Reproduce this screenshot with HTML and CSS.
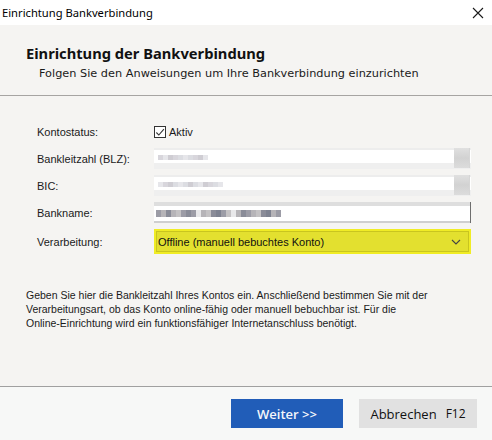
FILE: index.html
```html
<!DOCTYPE html>
<html lang="de">
<head>
<meta charset="utf-8">
<title>Einrichtung Bankverbindung</title>
<link rel="stylesheet" href="styles.css">
</head>
<body>
<div class="window">
  <div class="titlebar">
    <span class="title">Einrichtung Bankverbindung</span>
    <svg class="close" width="12" height="12" viewBox="0 0 12 12"><path d="M1 1 L11 11 M11 1 L1 11" stroke="#1a1a1a" stroke-width="1.1" fill="none"/></svg>
  </div>
  <div class="header">
    <div class="heading">Einrichtung der Bankverbindung</div>
    <div class="subtitle">Folgen Sie den Anweisungen um Ihre Bankverbindung einzurichten</div>
  </div>
  <div class="body">
    <div class="form">
      <div class="label">Kontostatus:</div>
      <div class="check-row">
        <span class="checkbox"><svg width="11" height="11" viewBox="0 0 11 11"><path d="M1.5 5.5 L4.2 8.3 L9.8 1.8" stroke="#333" stroke-width="1.2" fill="none"/></svg></span>
        <span class="check-label">Aktiv</span>
      </div>

      <div class="label">Bankleitzahl (BLZ):</div>
      <div class="field field-blur">
        <div class="blur-line"><i class="p1"></i><i class="p2"></i><i class="p3"></i><i class="p1"></i><i class="p4"></i><i class="p2"></i><i class="p4"></i><i class="p1"></i><i class="p3"></i><i class="p2"></i></div>
        <div class="spin"></div>
      </div>

      <div class="label">BIC:</div>
      <div class="field field-blur">
        <div class="blur-line"><i class="p2"></i><i class="p1"></i><i class="p3"></i><i class="p4"></i><i class="p2"></i><i class="p4"></i><i class="p3"></i><i class="p4"></i><i class="p2"></i><i class="p3"></i><i class="p1"></i><i class="p4"></i><i class="p2"></i></div>
        <div class="spin"></div>
      </div>

      <div class="label">Bankname:</div>
      <div class="field field-name">
        <div class="blur-line dark"><i class="d1"></i><i class="d2"></i><i class="d3"></i><i class="d2"></i><i class="d4"></i><i class="d1"></i><i class="d3"></i><i class="d1"></i><i class="d5"></i><i class="d2"></i><i class="d4"></i><i class="d3"></i><i class="d6"></i><i class="d1"></i><i class="d4"></i><i class="d5"></i><i class="d2"></i><i class="d3"></i><i class="d1"></i><i class="d2"></i><i class="d4"></i><i class="d3"></i><i class="d6"></i><i class="d2"></i><i class="d1"></i></div>
      </div>

      <div class="label">Verarbeitung:</div>
      <div class="select">
        <span class="select-text">Offline (manuell bebuchtes Konto)</span>
        <svg class="chev" width="10" height="6" viewBox="0 0 10 6"><path d="M1 1 L5 5 L9 1" stroke="#444" stroke-width="1.1" fill="none"/></svg>
      </div>
    </div>

    <p class="info">Geben Sie hier die Bankleitzahl Ihres Kontos ein. Anschließend bestimmen Sie mit der<br>Verarbeitungsart, ob das Konto online-fähig oder manuell bebuchbar ist. Für die<br>Online-Einrichtung wird ein funktionsfähiger Internetanschluss benötigt.</p>
  </div>
  <div class="footer">
    <button class="btn btn-primary">Weiter &gt;&gt;</button>
    <button class="btn btn-secondary">Abbrechen<span class="key">F12</span></button>
  </div>
</div>
</body>
</html>
```
FILE: styles.css
```css
* { box-sizing: border-box; }
html, body { margin: 0; padding: 0; }
body {
  width: 492px;
  height: 440px;
  overflow: hidden;
  background: #f5f4f2;
  font-family: "Liberation Sans", Arial, sans-serif;
  color: #1a1a1a;
}
.window {
  display: flex;
  flex-direction: column;
  width: 492px;
  height: 440px;
}
.titlebar {
  height: 25px;
  background: #ffffff;
  display: flex;
  align-items: center;
  justify-content: space-between;
  padding: 0 8px 0 2px;
}
.title {
  font-family: "Noto Sans", "Open Sans", sans-serif;
  font-size: 11.2px;
  color: #000;
}
.close { display: block; }
.header {
  height: 71px;
  border-bottom: 1px solid #a6a4a2;
  padding: 18px 0 0 26px;
}
.heading {
  font-family: "Noto Sans", sans-serif;
  font-weight: bold;
  font-size: 14.7px;
  line-height: 20px;
  color: #111;
}
.subtitle {
  font-family: "DejaVu Sans", sans-serif;
  font-size: 11.3px;
  line-height: 16px;
  margin-top: 3px;
  padding-left: 13px;
  color: #1a1a1a;
}
.body {
  flex: 1;
  border-bottom: 1px solid #a0a0a0;
  padding: 26px 21px 0 37px;
}
.form {
  display: grid;
  grid-template-columns: 117px 317px;
  grid-template-rows: 20px 21px 21px 21px 25px;
  row-gap: 6px;
  align-items: center;
}
.label, .check-label, .select-text, .info {
  font-family: "Liberation Sans", Arial, sans-serif;
  font-size: 11px;
}
.label { color: #1a1a1a; }
.check-row {
  display: flex;
  align-items: center;
  gap: 3px;
}
.checkbox {
  width: 12px;
  height: 12px;
  border: 1px solid #333;
  background: #fff;
  display: flex;
  align-items: center;
  justify-content: center;
}
.checkbox svg { display: block; }
.field {
  height: 21px;
  position: relative;
  display: flex;
  align-items: center;
}
.field-blur {
  background: linear-gradient(#ededed 0 2px, #ffffff 2px 15px, #efefef 15px 21px);
}
.field-name {
  background: linear-gradient(#dedede 0 4px, #ffffff 4px 19px, #cfcfcf 19px 21px);
  border-right: 1px solid #6e6e6e;
}
.blur-line {
  display: flex;
  height: 5px;
  padding-left: 4px;
  margin-top: -2px;
}
.blur-line.dark { height: 7px; margin-top: 2px; padding-left: 2px; }
.blur-line i { display: block; width: 5px; height: 100%; }
.p1 { background: #d8d6dc; }
.p2 { background: #e6e6ea; }
.p3 { background: #cfcdd3; }
.p4 { background: #dcdde2; }
.d1 { background: #9c9ca6; }
.d2 { background: #b6b4b8; }
.d3 { background: #8a8c98; }
.d4 { background: #c4c2c4; }
.d5 { background: #e8e8ea; }
.d6 { background: #7e8290; }
.spin {
  position: absolute;
  right: 1px;
  top: 0;
  width: 16px;
  height: 20px;
  background: linear-gradient(#e0e0e0, #d2d2d2 50%, #dcdcdc);
  border-right: 1px solid #d6d6d6;
}
.select {
  height: 25px;
  background: #e3e02f;
  border: 2px solid #f0ec25;
  outline: 1px solid #c9c51f;
  outline-offset: -3px;
  display: flex;
  align-items: center;
  justify-content: space-between;
  padding: 0 8px 0 2px;
  color: #111;
}
.chev { display: block; }
.info {
  margin: 34px 0 0 -11px;
  line-height: 14px;
  font-size: 10.5px;
  color: #1a1a1a;
}
.footer {
  height: 53px;
  background: #f7f8f7;
  display: flex;
  justify-content: flex-end;
  align-items: flex-start;
  gap: 16px;
  padding: 12px 15px 0 0;
}
.btn {
  height: 29px;
  border: none;
  font-family: "Open Sans", sans-serif;
  font-size: 13px;
  padding: 0;
  display: flex;
  align-items: center;
  justify-content: center;
}
.btn-primary {
  width: 112px;
  background: #215db8;
  color: #f4f6fb;
  font-weight: 600;
}
.btn-secondary {
  width: 118px;
  background: #e1e1e1;
  color: #111;
  font-weight: 500;
}
.key {
  font-size: 12px;
  margin-left: 9px;
  font-weight: 400;
}
```
